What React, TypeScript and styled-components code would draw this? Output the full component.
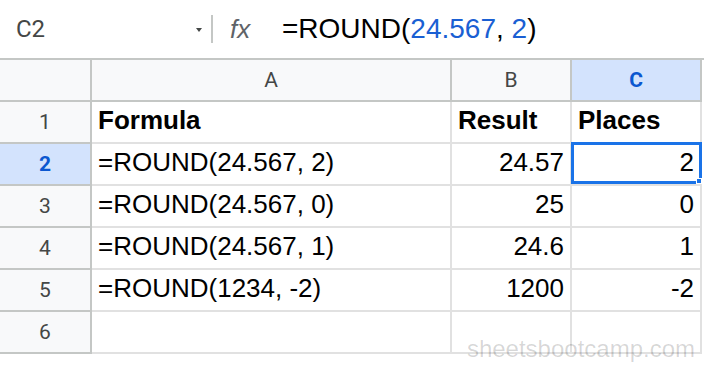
import React from "react";
import styled, { createGlobalStyle } from "styled-components";

const GlobalStyle = createGlobalStyle`
  html, body { margin: 0; padding: 0; background: #ffffff; }
  body { overflow: hidden; font-family: "Liberation Sans", Arial, sans-serif; }
  * { box-sizing: border-box; }
`;

const Page = styled.div`
  position: relative;
  width: 704px;
  height: 370px;
  background: #ffffff;
`;

const FormulaBar = styled.div`
  display: flex;
  align-items: center;
  height: 60px;
  border-bottom: 2px solid #c4c7c5;
  width: 704px;
`;

const NameBox = styled.div`
  display: flex;
  align-items: center;
  justify-content: space-between;
  width: 203px;
  padding-left: 16px;
  font-family: Roboto, "Liberation Sans", sans-serif;
  font-size: 24px;
  color: #444746;
`;

const Separator = styled.div`
  width: 2px;
  height: 28px;
  background: #c4c7c5;
  margin-left: 8px;
`;

const Fx = styled.div`
  font-family: "Liberation Sans", Arial, sans-serif;
  font-style: italic;
  font-size: 26px;
  color: #5f6368;
  margin-left: 17px;
  width: 52px;
`;

const FormulaText = styled.div`
  font-family: "Liberation Sans", Arial, sans-serif;
  font-size: 28px;
  color: #000000;
`;

const Num = styled.span`
  color: #1a5fd3;
`;

const Grid = styled.div`
  display: grid;
  grid-template-columns: 92px 360px 120px 130px;
  grid-auto-rows: 42px;
`;

const HeaderCell = styled.div<{ $active?: boolean }>`
  display: flex;
  align-items: center;
  justify-content: center;
  background: ${(p) => (p.$active ? "#d3e3fd" : "#f8f9fa")};
  border-right: 2px solid #c4c7c5;
  border-bottom: 2px solid #c4c7c5;
  font-family: Roboto, "Liberation Sans", sans-serif;
  font-size: 21px;
  font-weight: ${(p) => (p.$active ? 700 : 400)};
  color: ${(p) => (p.$active ? "#0b57d0" : "#444746")};
`;

const Cell = styled.div<{ $align?: "left" | "right"; $bold?: boolean }>`
  position: relative;
  display: flex;
  align-items: flex-end;
  justify-content: ${(p) => (p.$align === "right" ? "flex-end" : "flex-start")};
  padding: 0 6px 6px 6px;
  border-right: 2px solid #e1e1e1;
  border-bottom: 2px solid #e1e1e1;
  font-family: "Liberation Sans", Arial, sans-serif;
  font-size: 26px;
  font-weight: ${(p) => (p.$bold ? 700 : 400)};
  color: #000000;
  white-space: nowrap;
`;

const Selection = styled.div`
  position: absolute;
  top: -2px;
  left: -1px;
  right: -2px;
  bottom: 0;
  border: 3px solid #1a73e8;
  pointer-events: none;
`;

const FillHandle = styled.div`
  position: absolute;
  right: -3px;
  bottom: -3px;
  width: 6px;
  height: 6px;
  background: #1a73e8;
  border: 1px solid #ffffff;
`;

const Watermark = styled.div`
  position: absolute;
  right: 9px;
  bottom: 7px;
  font-family: "Liberation Sans", Arial, sans-serif;
  font-size: 24px;
  color: rgba(0, 0, 0, 0.16);
  pointer-events: none;
`;

const Caret = () => (
  <svg width="8" height="6" viewBox="0 0 8 6" style={{ marginTop: 1 }}>
    <path d="M1 1h6L4 5z" fill="#444746" />
  </svg>
);

type Row = { a: string; b: string; c: string; bold?: boolean };

const rows: Row[] = [
  { a: "Formula", b: "Result", c: "Places", bold: true },
  { a: "=ROUND(24.567, 2)", b: "24.57", c: "2" },
  { a: "=ROUND(24.567, 0)", b: "25", c: "0" },
  { a: "=ROUND(24.567, 1)", b: "24.6", c: "1" },
  { a: "=ROUND(1234, -2)", b: "1200", c: "-2" },
  { a: "", b: "", c: "" },
];

export default function App() {
  return (
    <Page>
      <GlobalStyle />
      <FormulaBar>
        <NameBox>
          <span>C2</span>
          <Caret />
        </NameBox>
        <Separator />
        <Fx>fx</Fx>
        <FormulaText>
          =ROUND(<Num>24.567</Num>, <Num>2</Num>)
        </FormulaText>
      </FormulaBar>
      <Grid>
        <HeaderCell />
        <HeaderCell>A</HeaderCell>
        <HeaderCell>B</HeaderCell>
        <HeaderCell $active>C</HeaderCell>
        {rows.map((r, i) => {
          const active = i === 1;
          return (
            <React.Fragment key={i}>
              <HeaderCell $active={active}>{i + 1}</HeaderCell>
              <Cell $bold={r.bold}>{r.a}</Cell>
              <Cell $bold={r.bold} $align={r.bold ? "left" : "right"}>
                {r.b}
              </Cell>
              <Cell $bold={r.bold} $align={r.bold ? "left" : "right"}>
                {r.c}
                {active && (
                  <Selection>
                    <FillHandle />
                  </Selection>
                )}
              </Cell>
            </React.Fragment>
          );
        })}
      </Grid>
      <Watermark>sheetsbootcamp.com</Watermark>
    </Page>
  );
}
